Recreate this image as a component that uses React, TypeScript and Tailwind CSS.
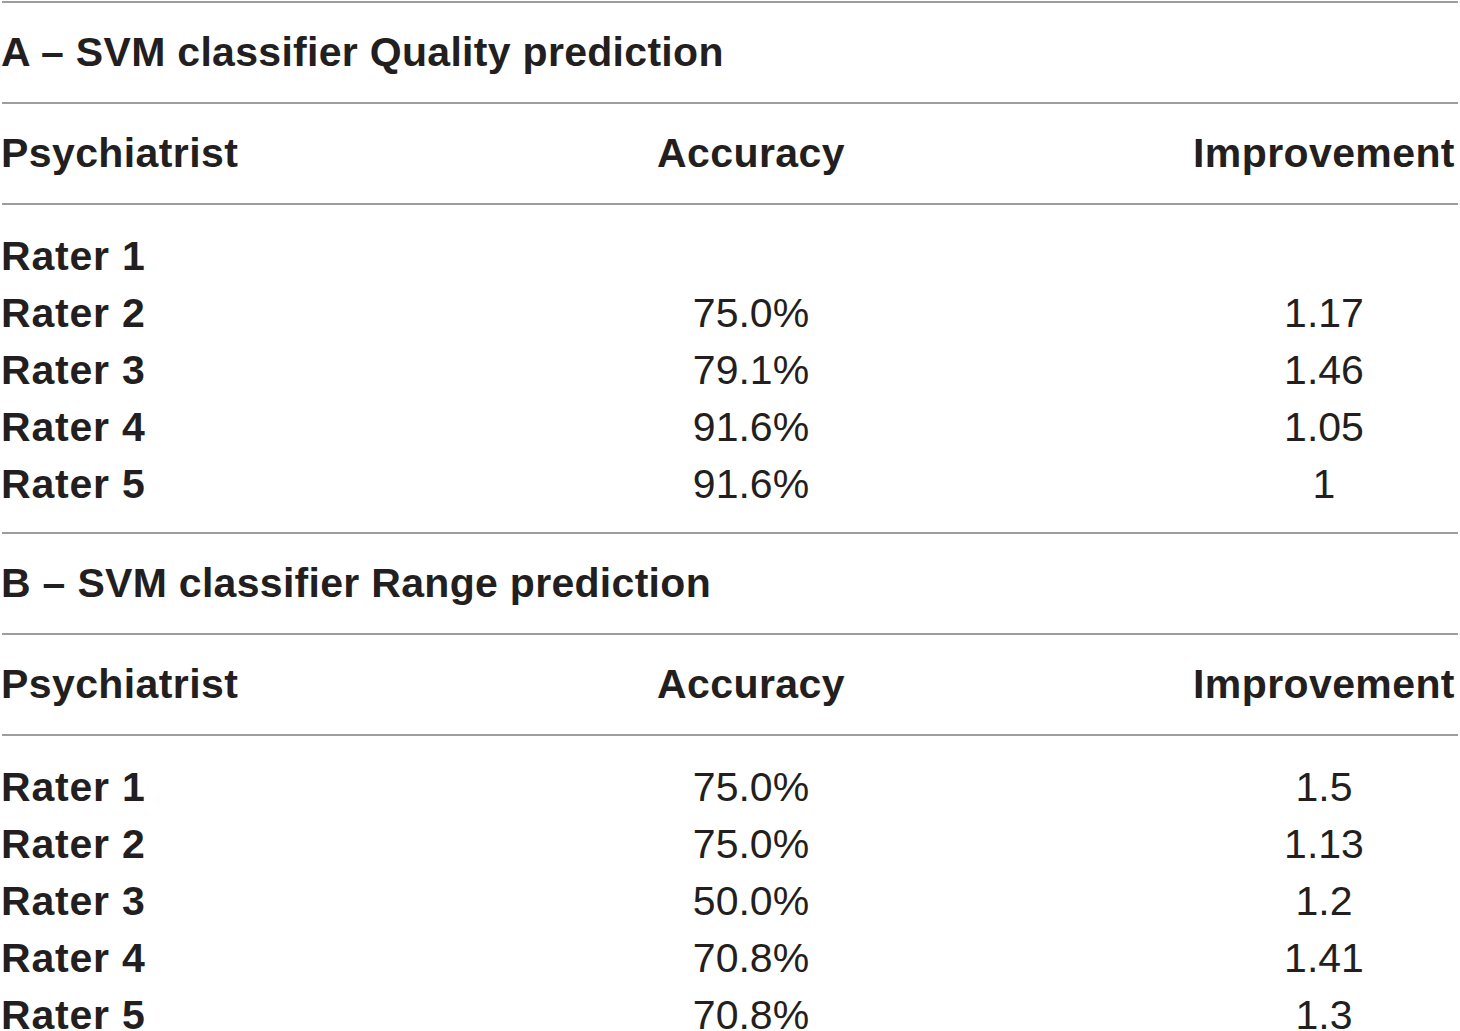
const sections = [
  {
    title: 'A – SVM classifier Quality prediction',
    rows: [
      ['Rater 1', '', ''],
      ['Rater 2', '75.0%', '1.17'],
      ['Rater 3', '79.1%', '1.46'],
      ['Rater 4', '91.6%', '1.05'],
      ['Rater 5', '91.6%', '1'],
    ],
  },
  {
    title: 'B – SVM classifier Range prediction',
    rows: [
      ['Rater 1', '75.0%', '1.5'],
      ['Rater 2', '75.0%', '1.13'],
      ['Rater 3', '50.0%', '1.2'],
      ['Rater 4', '70.8%', '1.41'],
      ['Rater 5', '70.8%', '1.3'],
    ],
  },
];

function Rule() {
  return <div className="mx-[2px] h-[2px] bg-[#9d9d9d]" />;
}

const grid = 'grid grid-cols-[314px_874px_272px] items-center';

function Section({ title, rows }: { title: string; rows: string[][] }) {
  return (
    <div>
      <Rule />
      <div className="flex h-[99px] items-center pl-[1px] font-bold tracking-[0.3px]">{title}</div>
      <Rule />
      <div className={`${grid} h-[99px] font-bold tracking-[0.4px]`}>
        <span className="pl-[1px]">Psychiatrist</span>
        <span className="text-center">Accuracy</span>
        <span className="text-center">Improvement</span>
      </div>
      <Rule />
      <div className="pt-[23px] pb-[19px]">
        {rows.map(([name, acc, imp]) => (
          <div key={name} className={`${grid} h-[57px]`}>
            <span className="pl-[1px] font-bold tracking-[0.8px]">{name}</span>
            <span className="text-center">{acc}</span>
            <span className="text-center">{imp}</span>
          </div>
        ))}
      </div>
    </div>
  );
}

export default function App() {
  return (
    <div className="h-[1031px] w-[1460px] overflow-hidden bg-white pt-[1px] text-[41px] leading-none text-[#231f20] [font-family:'Liberation_Sans',Arial,sans-serif]">
      {sections.map((s) => (
        <Section key={s.title} title={s.title} rows={s.rows} />
      ))}
    </div>
  );
}
